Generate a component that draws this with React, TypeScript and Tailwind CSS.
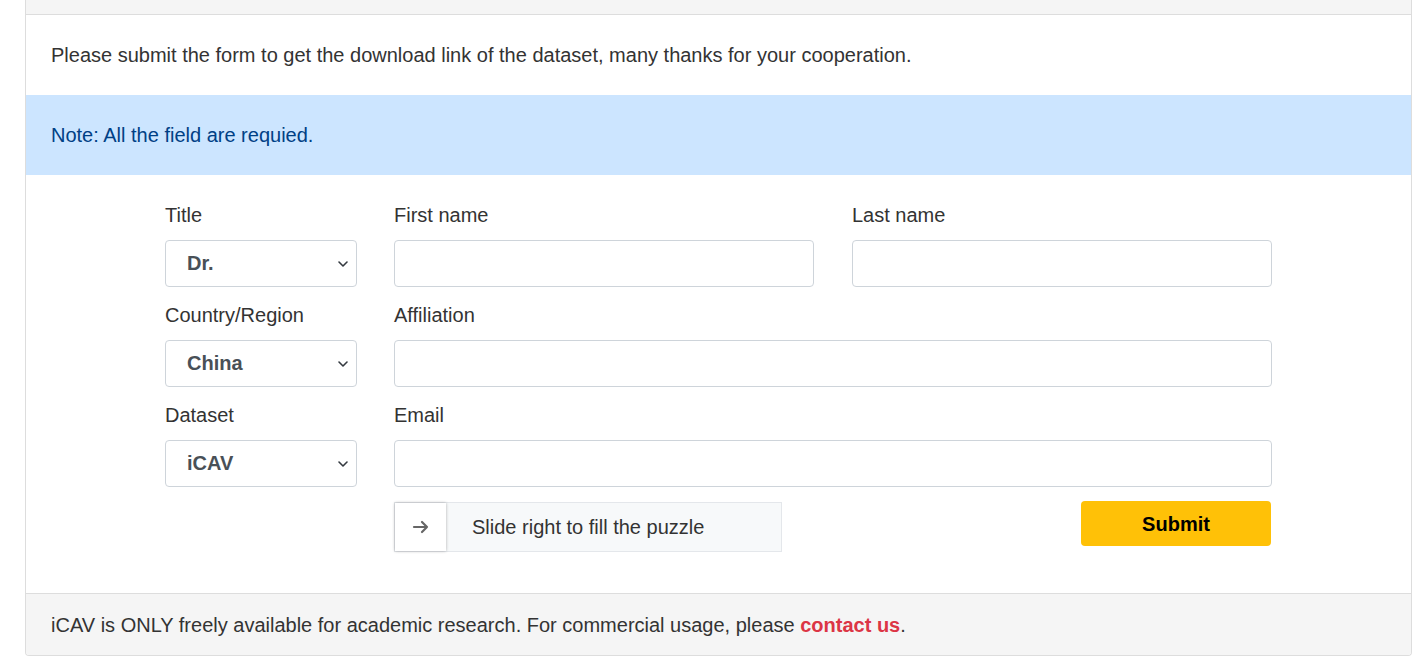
import React from 'react';

const Chevron = () => (
  <svg width="12" height="8" viewBox="0 0 12 8" className="absolute right-[7px] top-1/2 -translate-y-1/2">
    <path d="M2 2l4 4 4-4" fill="none" stroke="#343a40" strokeWidth="1.6" strokeLinecap="round" strokeLinejoin="round" />
  </svg>
);

const SelectBox = ({ value }: { value: string }) => (
  <div className="relative h-[47px] border border-[#ced4da] rounded-[4px] bg-white flex items-center pl-[21px] pb-[2px]">
    <span className="font-bold text-[20px] text-[#495057]">{value}</span>
    <Chevron />
  </div>
);

const TextBox = () => <div className="h-[47px] border border-[#ced4da] rounded-[4px] bg-white" />;

const Label = ({ children }: { children: React.ReactNode }) => (
  <div className="h-[24px] leading-[24px] text-[20px] text-[#333] mb-[13px]">{children}</div>
);

export default function App() {
  return (
    <div className="w-[1422px] h-[657px] overflow-hidden bg-white" style={{ fontFamily: '"Liberation Sans", Arial, sans-serif' }}>
      <div className="ml-[25px] w-[1387px] border-x border-b border-[#ddd] rounded-b-[4px] overflow-hidden">
        <div className="h-[15px] bg-[#f5f5f5] border-b border-[#ddd]" />
        <div className="px-[25px] h-[80px] flex items-center text-[20px] text-[#333]">
          Please submit the form to get the download link of the dataset, many thanks for your cooperation.
        </div>
        <div className="px-[25px] h-[80px] flex items-center text-[20px] text-[#004085] bg-[#cce5ff]">
          Note: All the field are requied.
        </div>
        <div className="w-[1107px] mx-auto pt-[28px] pb-[41px]">
          <div className="grid grid-cols-[192px_420px_420px] gap-x-[37px] gap-y-[16px]">
            <div>
              <Label>Title</Label>
              <SelectBox value="Dr." />
            </div>
            <div>
              <Label>First name</Label>
              <TextBox />
            </div>
            <div className="ml-[1px] -mr-[1px]">
              <Label>Last name</Label>
              <TextBox />
            </div>
            <div>
              <Label>Country/Region</Label>
              <SelectBox value="China" />
            </div>
            <div className="col-span-2 -mr-[1px]">
              <Label>Affiliation</Label>
              <TextBox />
            </div>
            <div>
              <Label>Dataset</Label>
              <SelectBox value="iCAV" />
            </div>
            <div className="col-span-2 -mr-[1px]">
              <Label>Email</Label>
              <TextBox />
            </div>
          </div>
          <div className="flex items-start mt-[15px]">
            <div className="w-[229px]" />
            <div className="w-[388px] h-[50px] flex border border-[#e4e7eb] bg-[#f7f9fa]">
              <div className="w-[51px] h-full bg-white flex items-center justify-center shadow-[0_0_3px_rgba(0,0,0,0.3)]">
                <svg width="18" height="14" viewBox="0 0 18 14">
                  <path d="M2 7h13M10 2l5 5-5 5" fill="none" stroke="#666" strokeWidth="2.2" strokeLinecap="round" strokeLinejoin="round" />
                </svg>
              </div>
              <div className="flex items-center pl-[26px] text-[20px] text-[#333]">Slide right to fill the puzzle</div>
            </div>
            <div className="flex-1 flex justify-end">
              <button className="w-[190px] h-[45px] -mt-[1px] mr-[1px] bg-[#ffc107] rounded-[4px] text-[20px] font-bold text-black">
                Submit
              </button>
            </div>
          </div>
        </div>
        <div className="bg-[#f5f5f5] border-t border-[#ddd] h-[62px] pt-[1px] px-[25px] flex items-center text-[20px] text-[#333]">
          <span>
            iCAV is ONLY freely available for academic research. For commercial usage, please{' '}
            <span className="font-bold text-[#dc3545]">contact us</span>.
          </span>
        </div>
      </div>
    </div>
  );
}
